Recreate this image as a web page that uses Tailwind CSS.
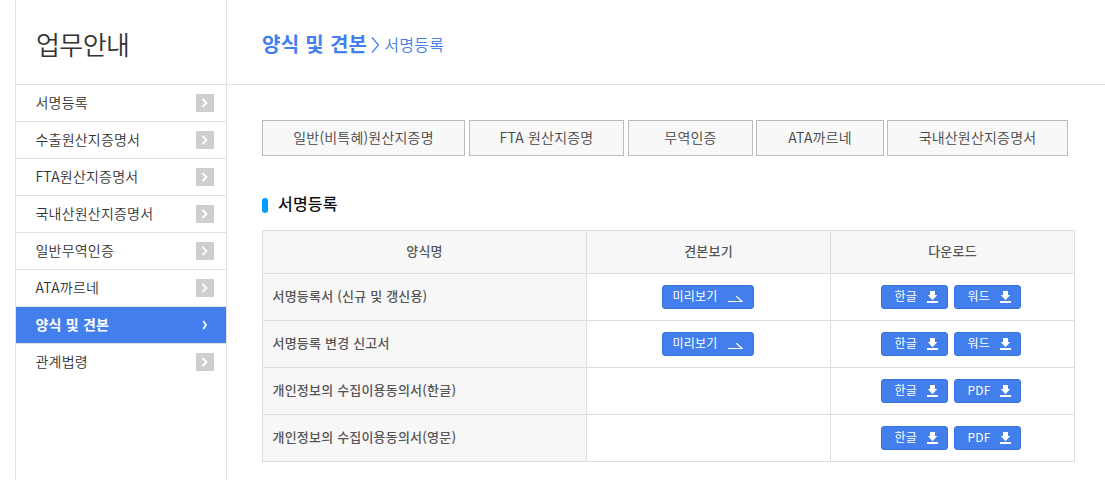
<!DOCTYPE html>
<html lang="ko">
<head>
  <meta charset="UTF-8" />
  <meta name="viewport" content="width=device-width, initial-scale=1.0" />
  <title>업무안내 - 양식 및 견본</title>
  <script src="https://cdn.jsdelivr.net/npm/@tailwindcss/browser@4"></script>
</head>
<body class="bg-white h-screen overflow-hidden font-['Noto_Sans_CJK_KR',sans-serif] text-[#333]">
  <!-- icons -->
  <svg class="hidden">
    <symbol id="chevron" viewBox="0 0 18 18"><path d="M6.500 5L10.500 9l-4 4" fill="none" stroke="#fff" stroke-width="1.8" /></symbol>
    <symbol id="chevron-small" viewBox="0 0 18 18"><path d="M7.300 5L10 9l-2.700 4" fill="none" stroke="#fff" stroke-width="1.700" /></symbol>
    <symbol id="arrow" viewBox="0 0 15 8"><path d="M0 6.500h14.200L8.200 1.200" fill="none" stroke="#fff" stroke-width="1.200" /></symbol>
    <symbol id="download" viewBox="0 0 11 12"><path d="M3 0h5v4h2.200L5.500 9.200.8 4H3zM0 10h11v2H0z" fill="#fff" /></symbol>
  </svg>

  <div class="flex h-full pl-[15px]">
    <aside class="w-[212px] shrink-0 border-x border-[#e1e1e1]">
      <h2 class="h-[85px] border-b border-[#e1e1e1] pl-5 pt-[5px] text-[26px] leading-[78px] font-[350] tracking-[-0.6px]">업무안내</h2>
      <ul class="text-[14px] leading-[34px] font-[350] tracking-[0.2px]">
        <li class="flex h-[37px] justify-between border-b border-[#e1e1e1] pl-[19.5px] pr-3">서명등록<svg class="mt-[9px] size-[18px] bg-[#cecece]"><use href="#chevron" /></svg></li>
        <li class="flex h-[37px] justify-between border-b border-[#e1e1e1] pl-[19.5px] pr-3">수출원산지증명서<svg class="mt-[9px] size-[18px] bg-[#cecece]"><use href="#chevron" /></svg></li>
        <li class="flex h-[37px] justify-between border-b border-[#e1e1e1] pl-[19.5px] pr-3">FTA원산지증명서<svg class="mt-[9px] size-[18px] bg-[#cecece]"><use href="#chevron" /></svg></li>
        <li class="flex h-[37px] justify-between border-b border-[#e1e1e1] pl-[19.5px] pr-3">국내산원산지증명서<svg class="mt-[9px] size-[18px] bg-[#cecece]"><use href="#chevron" /></svg></li>
        <li class="flex h-[37px] justify-between border-b border-[#e1e1e1] pl-[19.5px] pr-3">일반무역인증<svg class="mt-[9px] size-[18px] bg-[#cecece]"><use href="#chevron" /></svg></li>
        <li class="flex h-[37px] justify-between border-b border-[#e1e1e1] pl-[19.5px] pr-3">ATA까르네<svg class="mt-[9px] size-[18px] bg-[#cecece]"><use href="#chevron" /></svg></li>
        <li class="flex h-[37px] justify-between border-b border-[#e1e1e1] bg-[#427eec] pl-[19.5px] pr-3 font-bold text-white">양식 및 견본<svg class="mt-[9px] size-[18px]"><use href="#chevron-small" /></svg></li>
        <li class="flex h-[37px] justify-between pl-[19.5px] pr-3">관계법령<svg class="mt-[9px] size-[18px] bg-[#cecece]"><use href="#chevron" /></svg></li>
      </ul>
    </aside>

    <main class="flex-1">
      <header class="flex h-[85px] items-center border-b border-[#e1e1e1] pl-[35px] pt-[3px] text-[#427eec]">
        <h1 class="text-[20px] font-bold tracking-[0.3px]">양식 및 견본</h1>
        <svg class="ml-1 mr-1 mt-[2px] h-4 w-[9px]" viewBox="0 0 9 16" fill="none" stroke="#427eec" stroke-width="1.200"><path d="M1 .5L7.500 8 1 15.500" /></svg>
        <span class="text-[16px] font-[350] tracking-[0.3px]">서명등록</span>
      </header>

      <div class="pl-[35px] pt-[35px]">
        <nav class="flex text-center text-[14px] leading-[33px] font-[350] tracking-[0.2px] text-[#444]">
          <a class="mr-1 h-9 w-[203px] border border-[#bbb] bg-[#f8f8f8]">일반(비특혜)원산지증명</a>
          <a class="mr-1 h-9 w-[155px] border border-[#bbb] bg-[#f8f8f8]">FTA 원산지증명</a>
          <a class="mr-[3px] h-9 w-[125px] border border-[#bbb] bg-[#f8f8f8]">무역인증</a>
          <a class="mr-[3px] h-9 w-[128px] border border-[#bbb] bg-[#f8f8f8]">ATA까르네</a>
          <a class="h-9 w-[181px] border border-[#bbb] bg-[#f8f8f8]">국내산원산지증명서</a>
        </nav>

        <h3 class="mt-[33px] flex h-[27px] items-center text-[16px] font-medium tracking-[0.2px] text-[#111]">
          <span class="mr-[10px] mt-[6px] h-[15px] w-[6px] rounded-[3px] bg-[#009cff]"></span>서명등록
        </h3>

        <table class="mt-[14px] w-[813px] table-fixed border-collapse text-[13px] font-medium tracking-[0.2px] text-[#555]">
          <colgroup><col class="w-[324px]" /><col class="w-[244px]" /><col class="w-[244px]" /></colgroup>
          <thead>
            <tr class="h-[43px] bg-[#f7f7f7]">
              <th class="border border-[#ddd] p-0 pb-[2px] font-medium">양식명</th>
              <th class="border border-[#ddd] p-0 pb-[2px] font-medium">견본보기</th>
              <th class="border border-[#ddd] p-0 pb-[2px] font-medium">다운로드</th>
            </tr>
          </thead>
          <tbody id="forms"></tbody>
        </table>
      </div>
    </main>
  </div>

  <script>
    const forms = [
      { name: "서명등록서 (신규 및 갱신용)", preview: true, files: ["한글", "워드"] },
      { name: "서명등록 변경 신고서", preview: true, files: ["한글", "워드"] },
      { name: "개인정보의 수집이용동의서(한글)", preview: false, files: ["한글", "PDF"] },
      { name: "개인정보의 수집이용동의서(영문)", preview: false, files: ["한글", "PDF"] }
    ];

    const previewButton = `<a class="mx-auto flex h-6 w-[92px] justify-between rounded-[3px] border border-[#3873dd] bg-[#427eec] pl-[10px] pr-[10px] text-[12px] leading-[20px] font-normal text-white">미리보기<svg class="mt-[9px] h-2 w-[15px]"><use href="#arrow" /></svg></a>`;

    document.getElementById("forms").innerHTML = forms.map(form => `
      <tr class="h-[47px]">
        <td class="border border-[#ddd] bg-[#f7f7f7] pt-0 pb-[2px] pl-[9.5px] pr-0">${form.name}</td>
        <td class="border border-[#ddd] py-0 pl-0 pr-[2px]">${form.preview ? previewButton : ""}</td>
        <td class="border border-[#ddd] p-0">
          <div class="flex justify-center gap-[6px] pr-[3px]">
            ${form.files.map(file => `<a class="flex h-6 w-[67px] justify-between rounded-[3px] border border-[#3873dd] bg-[#427eec] pl-[12.5px] pr-[9px] text-[12px] leading-[20px] font-normal text-white">${file}<svg class="mt-[5px] h-3 w-[11px]"><use href="#download" /></svg></a>`).join("")}
          </div>
        </td>
      </tr>`).join("");
  </script>
</body>
</html>
